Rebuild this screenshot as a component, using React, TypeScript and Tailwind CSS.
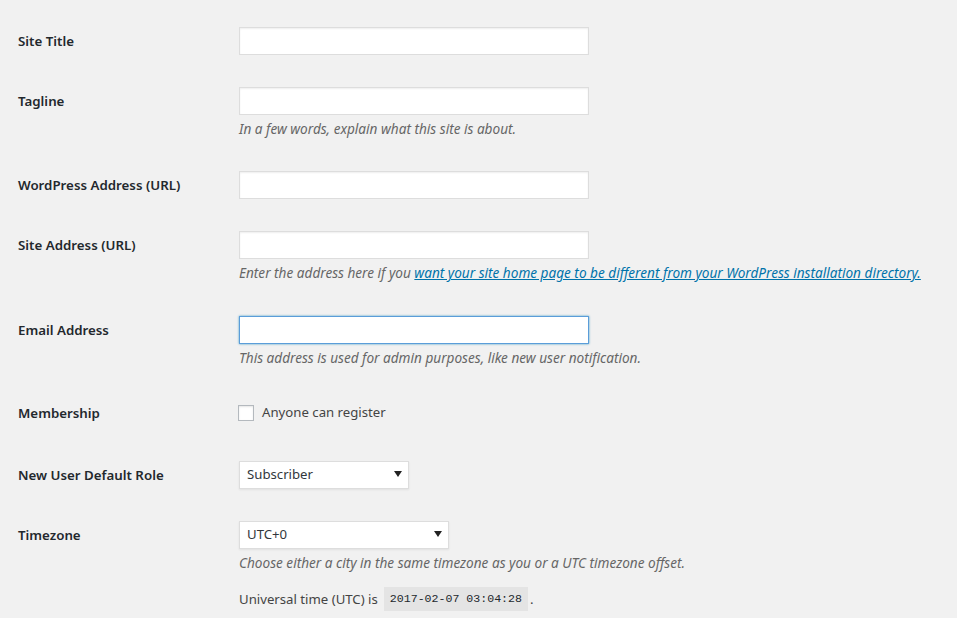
import React from 'react';

const font = { fontFamily: '"Noto Sans", "Open Sans", sans-serif' };

const Label = ({ children, top = 'pt-[16px]' }: { children: React.ReactNode; top?: string }) => (
  <div className={'w-[221px] shrink-0 ' + top}>
    <div className="h-[28px] flex items-center pt-[1px] text-[13.3px] font-semibold text-[#23282d]">
      {children}
    </div>
  </div>
);

const TextInput = ({ focused = false }: { focused?: boolean }) => (
  <div
    className={
      'w-[350px] h-[28px] bg-white border ' +
      (focused
        ? 'border-[#5b9dd9] shadow-[0_0_2px_rgba(30,140,190,0.8)]'
        : 'border-[#ddd] shadow-[inset_0_1px_2px_rgba(0,0,0,0.07)]')
    }
  />
);

const Desc = ({ children }: { children: React.ReactNode }) => (
  <p className="mt-[4px] leading-[20px] text-[13.6px] italic text-[#666]">{children}</p>
);

const Select = ({ value, width }: { value: string; width: string }) => (
  <div
    className={
      width +
      ' h-[28px] bg-white border border-[#ddd] shadow-[0_1px_2px_rgba(0,0,0,0.07)] flex items-center justify-between pl-[7px] pr-[6px] text-[13.2px] text-[#32373c]'
    }
  >
    <span>{value}</span>
    <svg width="8" height="6" viewBox="0 0 8 6" className="mb-[2px]">
      <path d="M0 0 L8 0 L4 6 Z" fill="#222" />
    </svg>
  </div>
);

export default function App() {
  return (
    <div className="min-h-screen bg-[#f1f1f1] text-[#444]" style={font}>
      <div className="px-[18px] pt-[11px]">
        <div className="flex h-[60px]">
          <Label>Site Title</Label>
          <div className="pt-[16px]">
            <TextInput />
          </div>
        </div>

        <div className="flex h-[84px]">
          <Label>Tagline</Label>
          <div className="pt-[16px]">
            <TextInput />
            <Desc>In a few words, explain what this site is about.</Desc>
          </div>
        </div>

        <div className="flex h-[60px]">
          <Label>WordPress Address (URL)</Label>
          <div className="pt-[16px]">
            <TextInput />
          </div>
        </div>

        <div className="flex h-[85px]">
          <Label>Site Address (URL)</Label>
          <div className="pt-[16px] w-[700px]">
            <TextInput />
            <Desc>
              Enter the address here if you{' '}
              <a href="#" className="text-[#0073aa] underline">
                want your site home page to be different from your WordPress installation directory.
              </a>
            </Desc>
          </div>
        </div>

        <div className="flex h-[84px]">
          <Label>Email Address</Label>
          <div className="pt-[16px]">
            <TextInput focused />
            <Desc>This address is used for admin purposes, like new user notification.</Desc>
          </div>
        </div>

        <div className="flex h-[61px]">
          <Label top="pt-[15px]">Membership</Label>
          <div className="pt-[15px] -ml-[1px]">
            <label className="h-[28px] flex items-center gap-[8px] text-[13.2px] text-[#444]">
              <span className="w-[16px] h-[16px] bg-white border border-[#b4b9be] shadow-[inset_0_1px_2px_rgba(0,0,0,0.1)]" />
              Anyone can register
            </label>
          </div>
        </div>

        <div className="flex h-[60px]">
          <Label>New User Default Role</Label>
          <div className="pt-[16px]">
            <Select value="Subscriber" width="w-[170px]" />
          </div>
        </div>

        <div className="flex">
          <Label>Timezone</Label>
          <div className="pt-[16px]">
            <Select value="UTC+0" width="w-[210px]" />
            <Desc>Choose either a city in the same timezone as you or a UTC timezone offset.</Desc>
            <p className="mt-[14px] leading-[20px] text-[13.2px] text-[#444] flex items-center">
              Universal time (UTC) is
              <code
                className="ml-[6px] mr-[2px] bg-[#e4e4e4] px-[6px] py-[2px] text-[11.6px] text-[#23282d]"
                style={{ fontFamily: '"Liberation Mono", monospace' }}
              >
                2017-02-07 03:04:28
              </code>
              .
            </p>
          </div>
        </div>
      </div>
    </div>
  );
}
